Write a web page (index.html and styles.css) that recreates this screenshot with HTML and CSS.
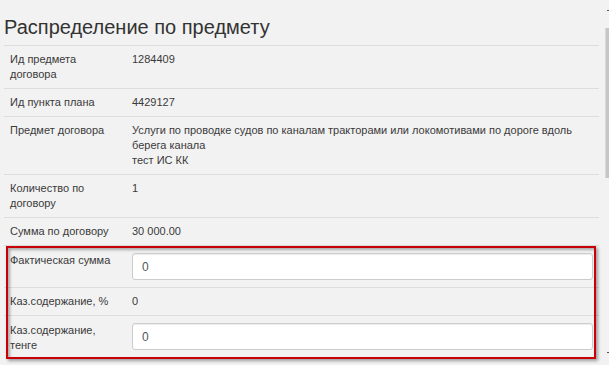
FILE: index.html
```html
<!DOCTYPE html>
<html lang="ru">
<head>
    <meta charset="UTF-8">
    <meta name="viewport" content="width=device-width, initial-scale=1.0">
    <title>Распределение по предмету</title>
    <link rel="stylesheet" href="styles.css">
</head>
<body>
    <div class="window">
        <main class="content">
            <h2 class="title">Распределение по предмету</h2>

            <!-- Subject details -->
            <div class="details">
                <div class="row">
                    <div class="label">Ид предмета договора</div>
                    <div class="value">1284409</div>
                </div>
                <div class="row">
                    <div class="label">Ид пункта плана</div>
                    <div class="value">4429127</div>
                </div>
                <div class="row">
                    <div class="label">Предмет договора</div>
                    <div class="value">Услуги по проводке судов по каналам тракторами или локомотивами по дороге вдоль берега канала<br>тест ИС КК</div>
                </div>
                <div class="row">
                    <div class="label">Количество по договору</div>
                    <div class="value">1</div>
                </div>
                <div class="row">
                    <div class="label">Сумма по договору</div>
                    <div class="value">30 000.00</div>
                </div>

                <!-- Highlighted editable fields -->
                <div class="marked">
                    <div class="row row-input">
                        <div class="label">Фактическая сумма</div>
                        <div class="value"><input class="field" type="text" value="0"></div>
                    </div>
                    <div class="row">
                        <div class="label">Каз.содержание, %</div>
                        <div class="value">0</div>
                    </div>
                    <div class="row row-input">
                        <div class="label">Каз.содержание, тенге</div>
                        <div class="value"><input class="field" type="text" value="0"></div>
                    </div>
                </div>
            </div>
        </main>

        <!-- Fake scrollbar -->
        <div class="scrollbar">
            <div class="arrow"></div>
            <div class="thumb"></div>
            <div class="arrow arrow-down"></div>
        </div>
    </div>
</body>
</html>
```

FILE: styles.css
```css
* {
    margin: 0;
    padding: 0;
    box-sizing: border-box;
}

body {
    background: #f2f2f2;
    font-family: 'Liberation Sans', Arial, sans-serif;
    font-size: 11px;
    line-height: 15px;
    color: #3a3a3a;
    overflow: hidden;
}

.window {
    display: flex;
    height: 365px;
}

/* Main content */
.content {
    width: 599px;
    padding-left: 4px;
}

.title {
    margin: 16px 0 7px 0;
    font-size: 20px;
    line-height: 22px;
    font-weight: normal;
    color: #333;
}

/* Details table */
.row {
    display: grid;
    grid-template-columns: 122px 1fr;
    border-top: 1px solid #dddddd;
}

.label,
.value {
    padding: 6px;
}

.row-input .label,
.row-input .value {
    padding-top: 7px;
    padding-bottom: 7px;
}

.field {
    display: block;
    width: 100%;
    height: 27px;
    padding: 0 9px;
    background: #fff;
    border: 1px solid #cccccc;
    border-radius: 3px;
    box-shadow: inset 0 1px 1px rgba(0, 0, 0, 0.075);
    font-family: inherit;
    font-size: 12px;
    color: #555;
}

/* Red annotation frame */
.marked {
    position: relative;
}

.marked::after {
    content: "";
    position: absolute;
    top: 1px;
    left: 2px;
    right: 3px;
    bottom: 1px;
    border: 2px solid #c8000a;
    box-shadow: 2px 2px 3px rgba(0, 0, 0, 0.35), inset 2px 2px 3px rgba(0, 0, 0, 0.3);
    pointer-events: none;
}

/* Scrollbar */
.scrollbar {
    display: flex;
    flex-direction: column;
    width: 4px;
    margin-left: 6px;
}

.arrow {
    width: 3px;
    height: 1px;
    margin: 10px 0 0 2px;
    background: #555;
}

.arrow-down {
    margin-top: auto;
    margin-bottom: 12px;
}

.thumb {
    height: 150px;
    margin-top: 17px;
    background: #c6c6c6;
    border-left: 1px solid #d8d8d8;
}
```
